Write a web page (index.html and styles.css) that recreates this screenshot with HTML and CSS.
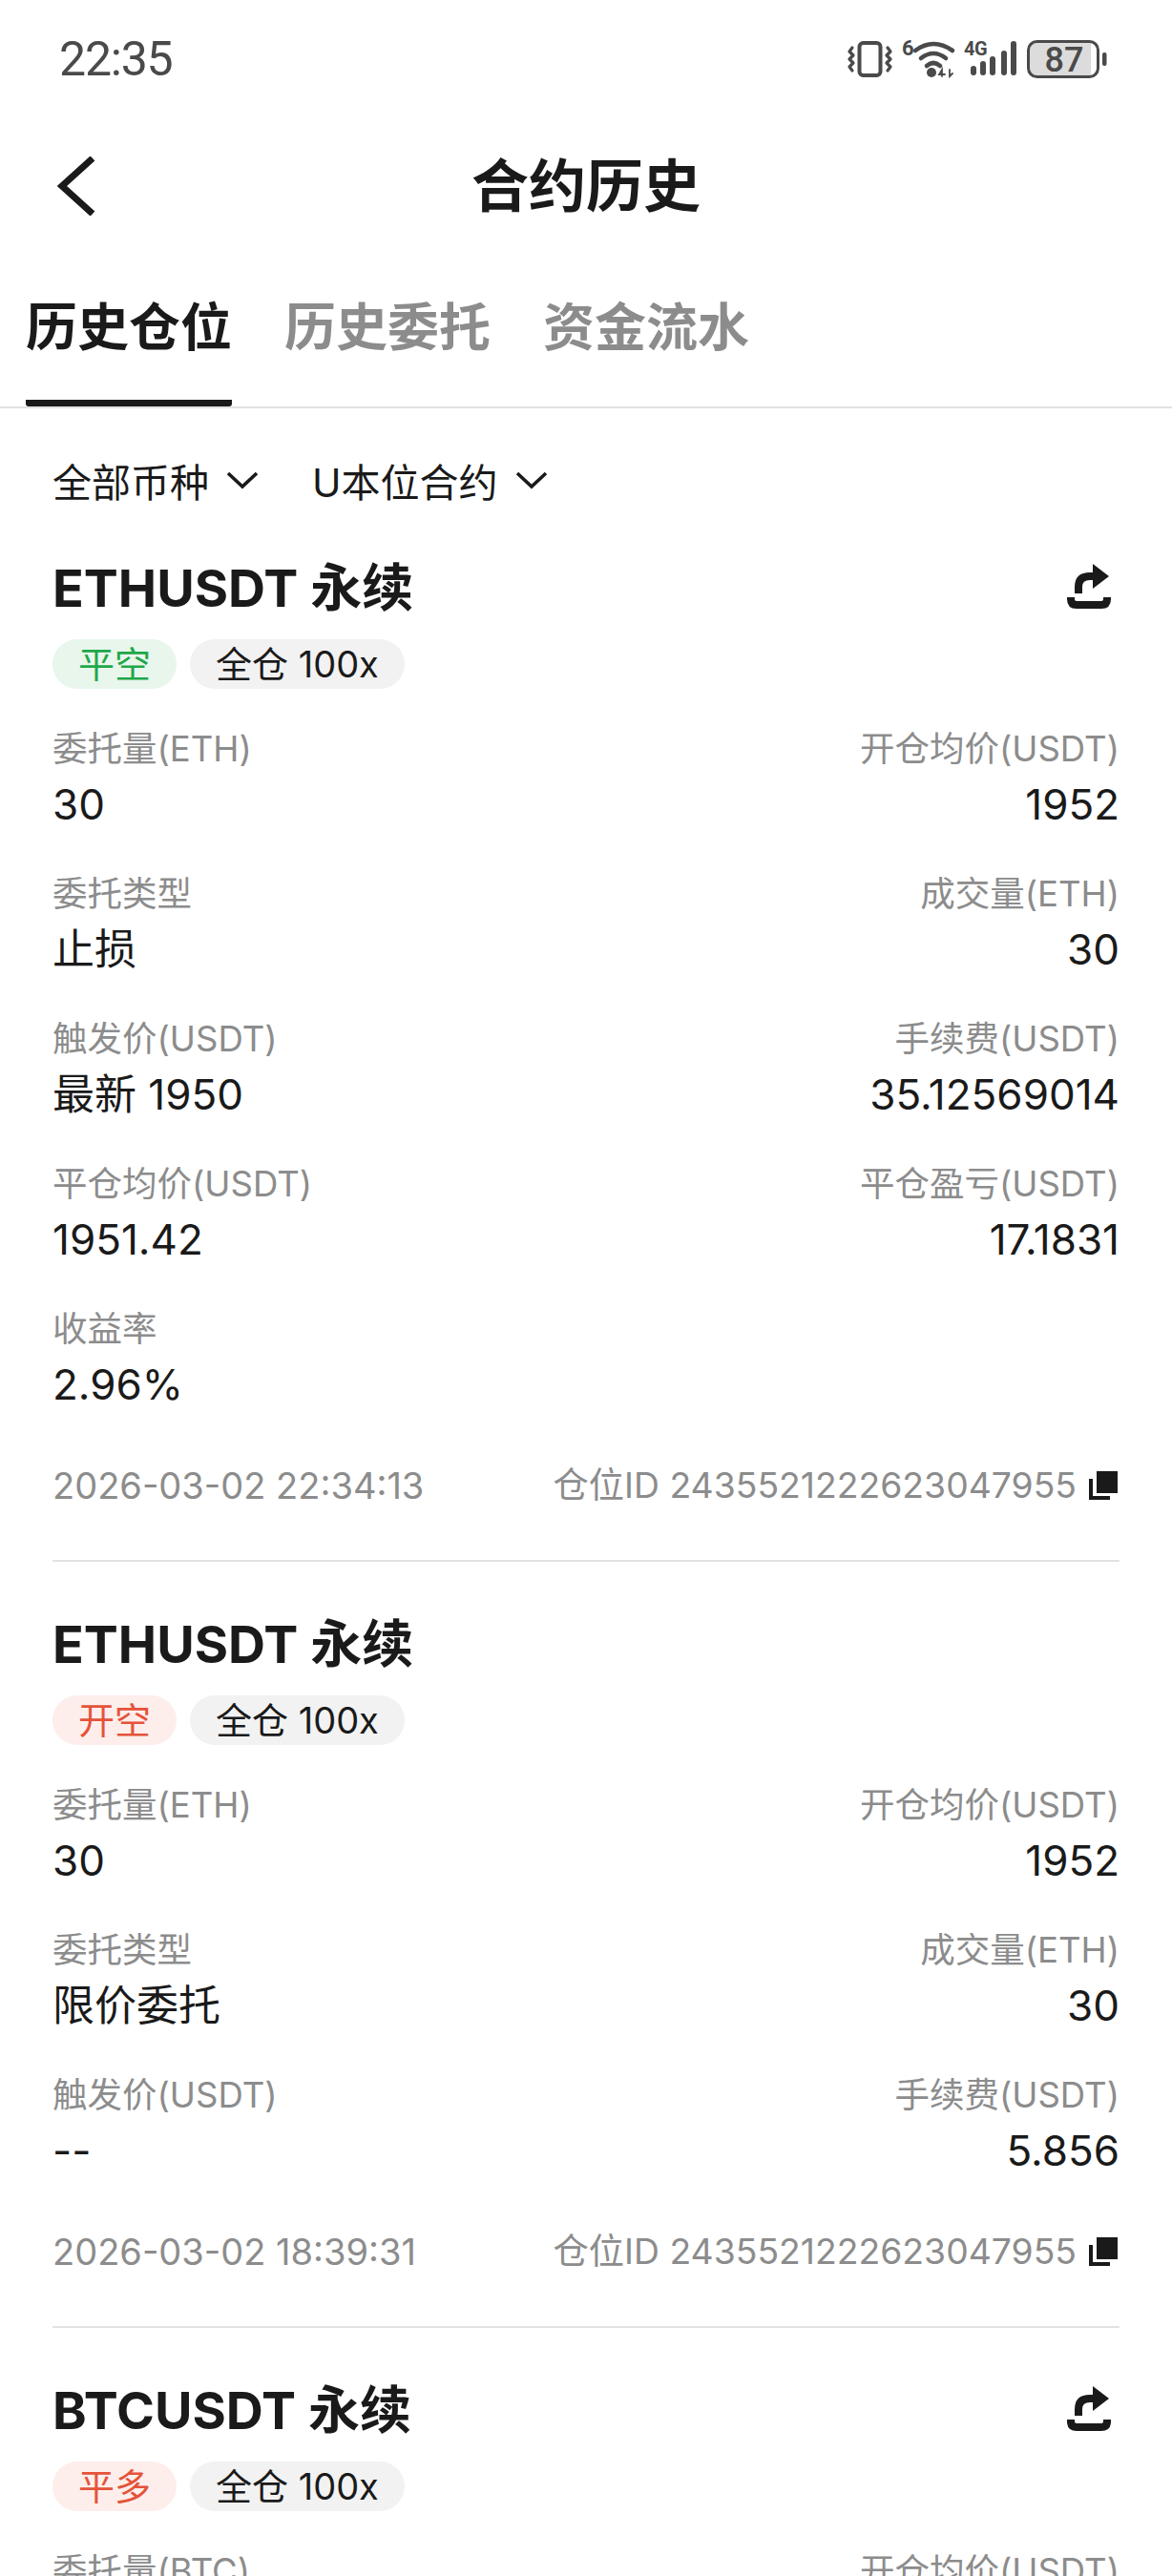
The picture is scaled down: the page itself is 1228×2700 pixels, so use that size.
FILE: index.html
```html
<!DOCTYPE html>
<html lang="zh-CN">
<head>
  <meta charset="UTF-8">
  <meta name="viewport" content="width=device-width, initial-scale=1.0">
  <title>合约历史</title>
  <link rel="stylesheet" href="styles.css">
</head>
<body>
  <div class="statusbar">
    <div class="time">22:35</div>
    <div class="status-icons">
      <svg class="ic-vibrate" width="47" height="38" viewBox="0 0 47 38" fill="none" stroke="#4a4a4a" stroke-linecap="round" stroke-linejoin="round">
        <rect x="12.5" y="2" width="22" height="34" rx="4" stroke-width="4"/>
        <path d="M5 7 L2 11 L6 15 L2 19 L6 23 L2 27 L5 31" stroke-width="3.2"/>
        <path d="M42 7 L45 11 L41 15 L45 19 L41 23 L45 27 L42 31" stroke-width="3.2"/>
      </svg>
      <svg class="ic-wifi" width="55" height="40" viewBox="0 0 55 40" fill="none" stroke="#4a4a4a" stroke-linecap="round">
        <text x="0" y="16" class="svg-six">6</text>
        <path d="M14 11 Q33 -3 53 11" stroke-width="4.6"/>
        <path d="M20 19 Q33 9 46 19" stroke-width="4.6"/>
        <path d="M26 27 Q33 21 40 27" stroke-width="4.6"/>
        <circle cx="31" cy="34" r="5" fill="#4a4a4a" stroke="none"/>
        <path d="M42 38 V31 L39 36 H45 M50 31 V38 L53 35" stroke-width="1.8"/>
      </svg>
      <svg class="ic-signal" width="56" height="38" viewBox="0 0 56 38" fill="none" stroke="#4a4a4a" stroke-linecap="round">
        <text x="0" y="15" class="svg-small">4G</text>
        <path d="M10 29 V33 M20 24 V33 M30 19 V33" stroke-width="6"/>
        <path d="M42 13 V33 M52 3 V33" stroke-width="6"/>
      </svg>
      <svg class="ic-battery" width="84" height="40" viewBox="0 0 84 40" fill="none">
        <path d="M9 3 H67 V37 H9 Q3 37 3 31 V9 Q3 3 9 3 Z" fill="#dcdcdc"/>
        <rect x="1.5" y="1.5" width="73" height="37" rx="9" stroke="#4a4a4a" stroke-width="3"/>
        <rect x="79" y="13" width="4.5" height="14" rx="2" fill="#4a4a4a"/>
        <text x="39" y="33" text-anchor="middle" class="svg-batt">87</text>
      </svg>
    </div>
  </div>

  <div class="navbar">
    <svg class="back" width="40" height="62" viewBox="0 0 40 62" fill="none" stroke="#1a1a1a" stroke-width="7">
      <path d="M37 2 L5 31 L37 60"/>
    </svg>
    <div class="nav-title">合约历史</div>
  </div>

  <div class="tabs">
    <div class="tab active">历史仓位</div>
    <div class="tab">历史委托</div>
    <div class="tab">资金流水</div>
  </div>

  <div class="filters">
    <div class="filter">全部币种
      <svg width="34" height="20" viewBox="0 0 34 20" fill="none" stroke="#1a1a1a" stroke-width="3.6"><path d="M2 3 L17 17 L32 3"/></svg>
    </div>
    <div class="filter">U本位合约
      <svg width="34" height="20" viewBox="0 0 34 20" fill="none" stroke="#1a1a1a" stroke-width="3.6"><path d="M2 3 L17 17 L32 3"/></svg>
    </div>
  </div>

  <div class="card">
    <div class="card-head">
      <div class="symbol">ETHUSDT 永续</div>
      <svg class="share" width="52" height="50" viewBox="0 0 52 50" fill="none" stroke="#1a1a1a" stroke-width="8">
        <path d="M14 33 V26 Q14 15 26 15 H32"/>
        <path d="M29 2 L46 15 L29 28 Z" fill="#1a1a1a" stroke="none"/>
        <path d="M6 37 V39 Q6 45 12 45 H38 Q44 45 44 39 V37"/>
      </svg>
    </div>
    <div class="tags">
      <span class="tag green">平空</span>
      <span class="tag grey">全仓 100x</span>
    </div>
    <div class="fields">
      <div class="field"><div class="label">委托量(ETH)</div><div class="value">30</div></div>
      <div class="field right"><div class="label">开仓均价(USDT)</div><div class="value">1952</div></div>
      <div class="field"><div class="label">委托类型</div><div class="value">止损</div></div>
      <div class="field right"><div class="label">成交量(ETH)</div><div class="value">30</div></div>
      <div class="field"><div class="label">触发价(USDT)</div><div class="value">最新 1950</div></div>
      <div class="field right"><div class="label">手续费(USDT)</div><div class="value">35.12569014</div></div>
      <div class="field"><div class="label">平仓均价(USDT)</div><div class="value">1951.42</div></div>
      <div class="field right"><div class="label">平仓盈亏(USDT)</div><div class="value">17.1831</div></div>
      <div class="field"><div class="label">收益率</div><div class="value">2.96%</div></div>
    </div>
    <div class="card-foot">
      <div>2026-03-02 22:34:13</div>
      <div class="pos-id">仓位ID 2435521222623047955
        <svg width="30" height="30" viewBox="0 0 30 30" fill="#1a1a1a"><rect x="8" y="0" width="22" height="23"/><path d="M0 8 H4 V26 H22 V30 H0 Z"/></svg>
      </div>
    </div>
  </div>

  <div class="card">
    <div class="card-head">
      <div class="symbol">ETHUSDT 永续</div>
    </div>
    <div class="tags">
      <span class="tag red">开空</span>
      <span class="tag grey">全仓 100x</span>
    </div>
    <div class="fields">
      <div class="field"><div class="label">委托量(ETH)</div><div class="value">30</div></div>
      <div class="field right"><div class="label">开仓均价(USDT)</div><div class="value">1952</div></div>
      <div class="field"><div class="label">委托类型</div><div class="value">限价委托</div></div>
      <div class="field right"><div class="label">成交量(ETH)</div><div class="value">30</div></div>
      <div class="field"><div class="label">触发价(USDT)</div><div class="value">--</div></div>
      <div class="field right"><div class="label">手续费(USDT)</div><div class="value">5.856</div></div>
    </div>
    <div class="card-foot">
      <div>2026-03-02 18:39:31</div>
      <div class="pos-id">仓位ID 2435521222623047955
        <svg width="30" height="30" viewBox="0 0 30 30" fill="#1a1a1a"><rect x="8" y="0" width="22" height="23"/><path d="M0 8 H4 V26 H22 V30 H0 Z"/></svg>
      </div>
    </div>
  </div>

  <div class="card">
    <div class="card-head">
      <div class="symbol">BTCUSDT 永续</div>
      <svg class="share" width="52" height="50" viewBox="0 0 52 50" fill="none" stroke="#1a1a1a" stroke-width="8">
        <path d="M14 33 V26 Q14 15 26 15 H32"/>
        <path d="M29 2 L46 15 L29 28 Z" fill="#1a1a1a" stroke="none"/>
        <path d="M6 37 V39 Q6 45 12 45 H38 Q44 45 44 39 V37"/>
      </svg>
    </div>
    <div class="tags">
      <span class="tag red">平多</span>
      <span class="tag grey">全仓 100x</span>
    </div>
    <div class="fields">
      <div class="field"><div class="label">委托量(BTC)</div></div>
      <div class="field right"><div class="label">开仓均价(USDT)</div></div>
    </div>
  </div>
</body>
</html>
```

FILE: styles.css
```css
html, body {
  margin: 0;
  padding: 0;
}
body {
  width: 1228px;
  height: 2700px;
  overflow: hidden;
  background: #fff;
  color: #1a1a1a;
  font-family: Inter, "Noto Sans CJK SC", sans-serif;
}

.statusbar {
  height: 124px;
  padding: 0 62px;
  display: flex;
  justify-content: space-between;
  align-items: center;
}
.time {
  font-family: Roboto, sans-serif;
  font-size: 50px;
  letter-spacing: -1.2px;
  color: #4a4a4a;
}
.status-icons {
  display: flex;
  align-items: center;
  gap: 10px;
  margin-right: 6px;
  margin-top: -1px;
}
.status-icons svg {
  overflow: visible;
}
.svg-six {
  font-family: Roboto, sans-serif;
  font-size: 22px;
  font-weight: 700;
  fill: #4a4a4a;
  stroke: none;
}
.svg-small {
  font-family: Roboto, sans-serif;
  font-size: 20px;
  font-weight: 700;
  letter-spacing: -0.5px;
  fill: #4a4a4a;
  stroke: none;
}
.svg-batt {
  font-family: Roboto, sans-serif;
  font-size: 36px;
  font-weight: 500;
  fill: #4a4a4a;
}

.navbar {
  height: 142px;
  position: relative;
  display: flex;
  align-items: center;
  justify-content: center;
}
.back {
  position: absolute;
  left: 60px;
  top: 40px;
}
.nav-title {
  font-size: 60px;
  font-weight: 700;
  margin-top: -9px;
}

.tabs {
  height: 160px;
  padding: 0 27px;
  display: flex;
  gap: 55px;
  border-bottom: 2px solid #e2e2e2;
}
.tab {
  height: 160px;
  line-height: 156px;
  font-size: 54px;
  font-weight: 700;
  color: #8c8c8c;
  box-sizing: border-box;
}
.tab.active {
  color: #1a1a1a;
  border-bottom: 7px solid #1a1a1a;
  border-radius: 0 0 3px 3px;
}

.filters {
  height: 150px;
  margin-bottom: 4px;
  padding: 0 55px;
  display: flex;
  align-items: center;
  gap: 56px;
}
.filter {
  display: flex;
  align-items: center;
  gap: 18px;
  font-size: 41px;
}

.card {
  margin: 0 55px;
  padding-bottom: 53px;
  margin-bottom: 52px;
  border-bottom: 2px solid #e2e2e2;
}
.card-head {
  height: 60px;
  display: flex;
  justify-content: space-between;
  align-items: center;
}
.symbol {
  font-size: 54px;
  font-weight: 700;
}
.share {
  margin-right: 5px;
  margin-top: 4px;
}
.tags {
  margin-top: 28px;
  display: flex;
  gap: 14px;
}
.tag {
  height: 52px;
  line-height: 52px;
  padding: 0 27px;
  border-radius: 26px;
  font-size: 38px;
}
.tag.green {
  background: #e8f6ec;
  color: #1fa84a;
}
.tag.red {
  background: #fdeeeb;
  color: #e5533a;
}
.tag.grey {
  background: #f2f2f2;
}

.fields {
  margin-top: 37px;
  display: grid;
  grid-template-columns: 1fr 1fr;
  row-gap: 36px;
}
.field.right {
  text-align: right;
}
.label {
  line-height: 52px;
  font-size: 36.5px;
  color: #8c8c8c;
}
.value {
  line-height: 64px;
  font-size: 44px;
}

.card-foot {
  margin-top: 49px;
  display: flex;
  justify-content: space-between;
  align-items: center;
  line-height: 50px;
  font-size: 38px;
  color: #8c8c8c;
}
.pos-id {
  display: flex;
  align-items: center;
  gap: 13px;
  margin-right: 2px;
  font-size: 37.3px;
}
```
